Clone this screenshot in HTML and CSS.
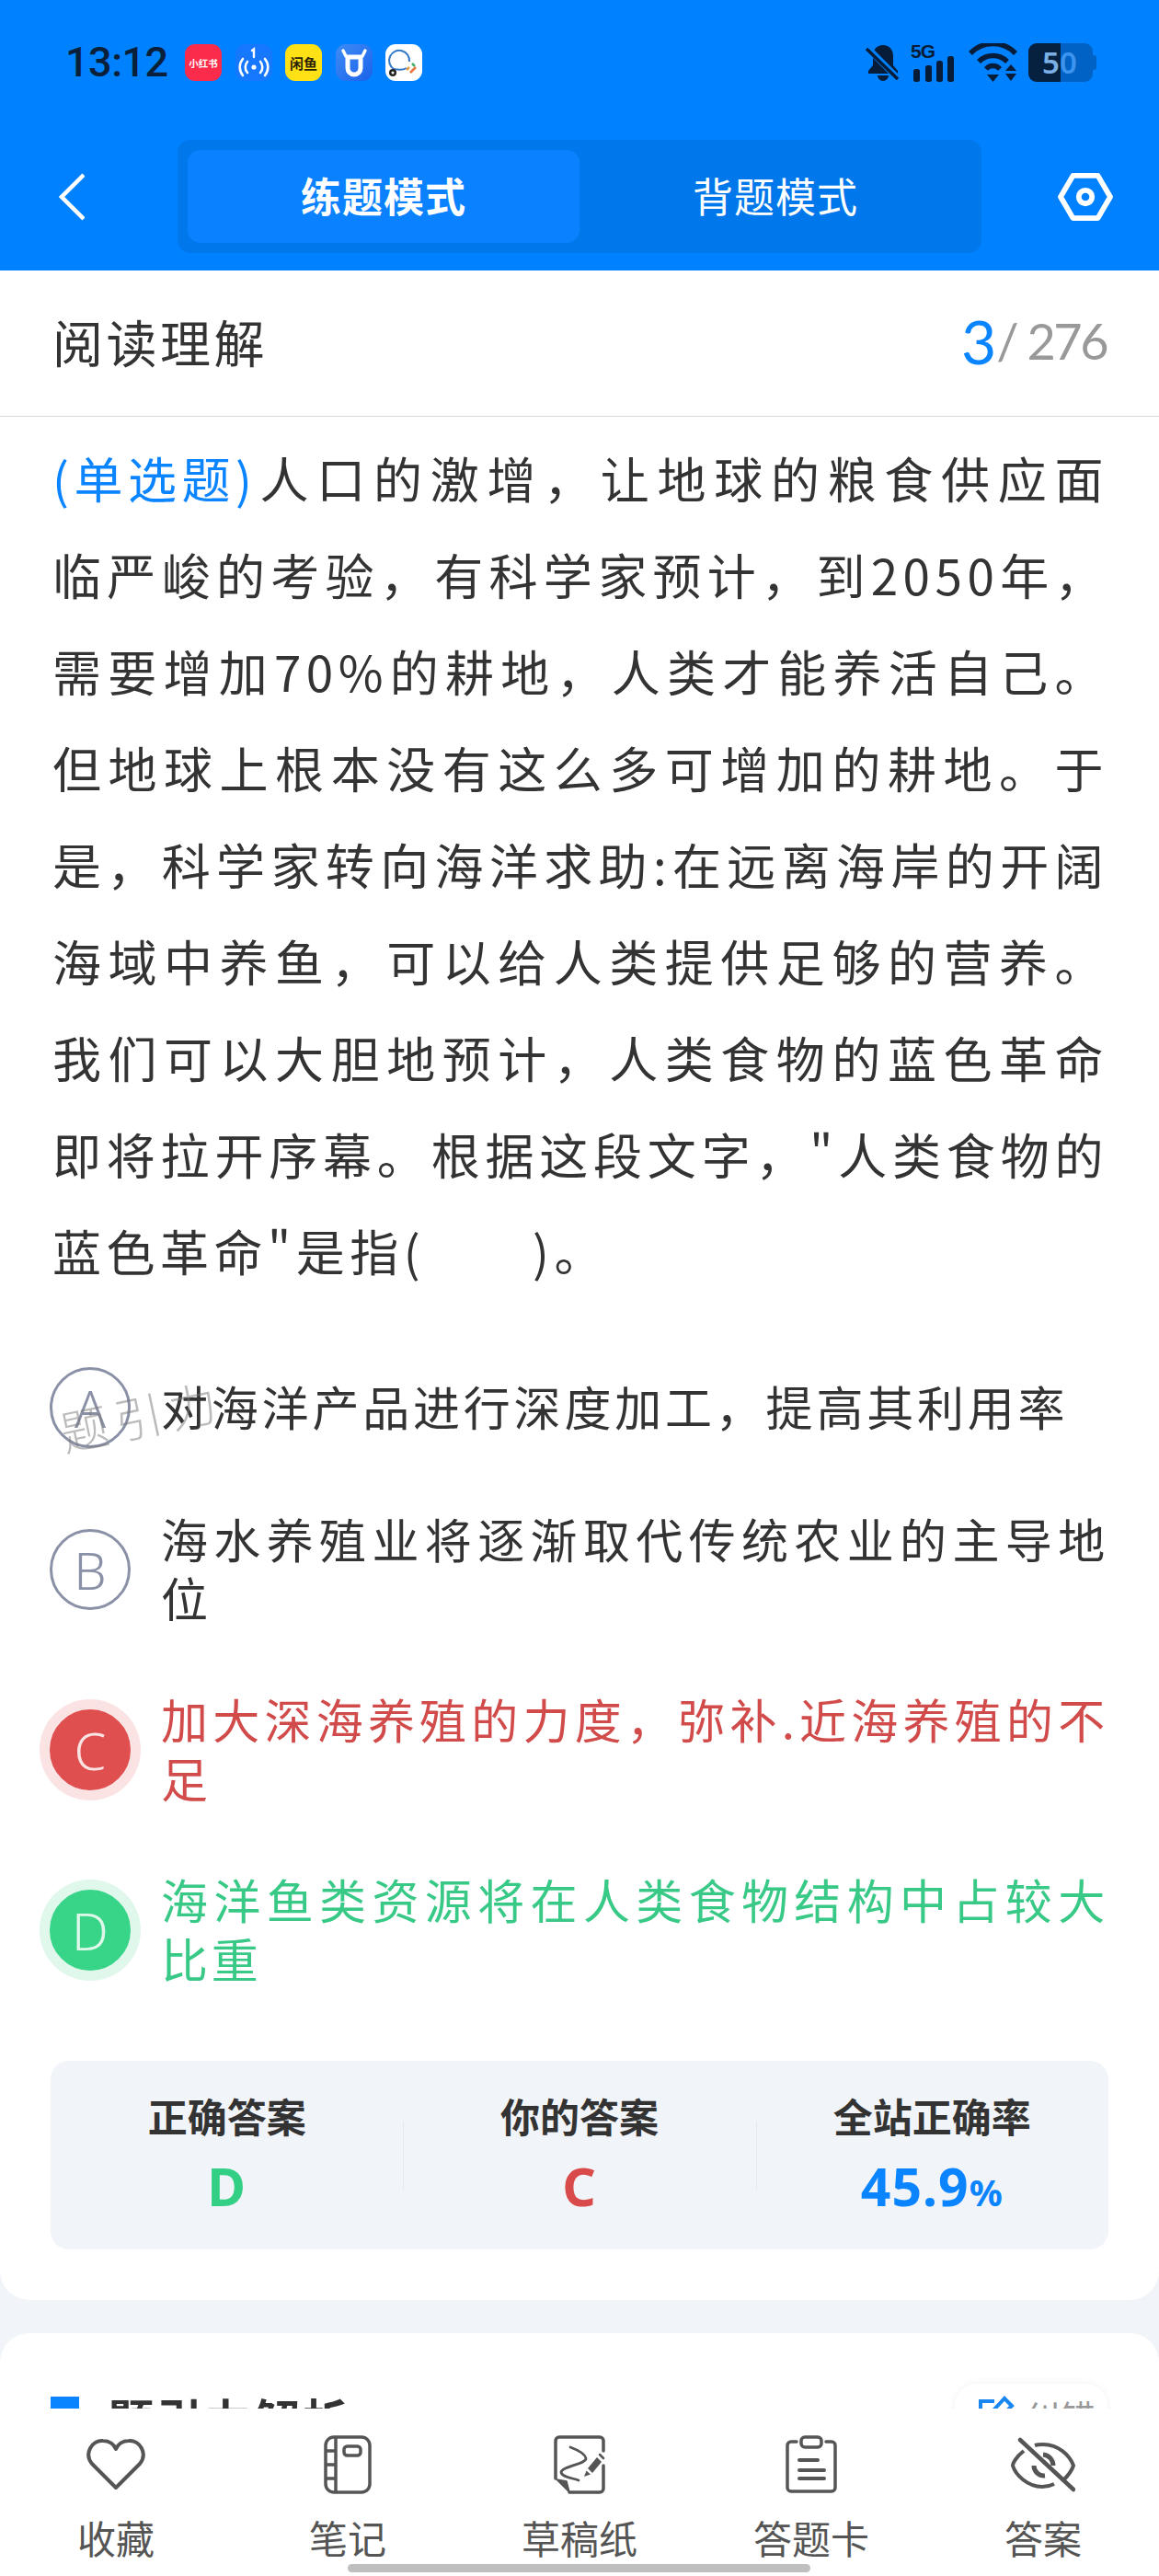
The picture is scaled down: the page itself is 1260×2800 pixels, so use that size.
FILE: index.html
```html
<!DOCTYPE html>
<html lang="zh-CN">
<head>
<meta charset="utf-8">
<title>练题模式</title>
<link rel="stylesheet" href="styles.css">
</head>
<body>
<div class="page">
  <header class="header">
    <div class="status">
      <div class="status-left">
        <span class="time">13:12</span>
        <div class="apps">
          <span class="app app-red">小红书</span>
          <span class="app app-blue">
            <svg viewBox="0 0 40 40" width="40" height="40" fill="none" stroke="#fff" stroke-width="2.6" stroke-linecap="round">
              <circle cx="20" cy="25" r="2.6" fill="#fff" stroke="none"/>
              <path d="M13 19a9 9 0 0 0 0 12M27 19a9 9 0 0 1 0 12M8 16a14 14 0 0 0 0 18M32 16a14 14 0 0 1 0 18"/>
              <path d="M18 7l2-1.500V14" stroke-width="2.4"/>
            </svg>
          </span>
          <span class="app app-yellow">闲鱼</span>
          <span class="app app-cow">
            <svg viewBox="0 0 40 40" width="40" height="40" fill="none" stroke="#fff" stroke-width="5" stroke-linejoin="round">
              <path d="M13 14h14v12a7 7 0 0 1-14 0z"/>
              <path d="M11 13L8 7M29 13l3-6" stroke-width="3.500" stroke-linecap="round"/>
            </svg>
          </span>
          <span class="app app-white">
            <svg viewBox="0 0 40 40" width="40" height="40" fill="none" stroke-width="2">
              <path d="M9 27a11 11 0 1 1 17-8" stroke="#3478c8"/>
              <path d="M9 27q9 2 14-1" stroke="#3478c8"/>
              <path d="M29 21l3 3" stroke="#3fb26a" stroke-width="2.500"/>
              <path d="M26 25l-3 3" stroke="#e89a3c" stroke-width="2.500"/>
              <path d="M27 31l2-2 4-4" stroke="#e8743c" stroke-width="2.500"/>
              <circle cx="8" cy="31" r="4" fill="#222" stroke="none"/>
              <circle cx="8" cy="31" r="1.500" fill="#fff" stroke="none"/>
            </svg>
          </span>
        </div>
      </div>
      <div class="status-right">
        <svg class="st-bell" viewBox="0 0 40 42" width="40" height="42">
          <path d="M20 2c-7 0-11 5-11 12v10l-5 6v3h32v-3l-5-6V14C31 7 27 2 20 2zM14 35a6 6 0 0 0 12 0z" fill="#071c38"/>
          <path d="M3 5l33 33" stroke="#0081ff" stroke-width="7"/>
          <path d="M2 6l34 33" stroke="#071c38" stroke-width="3.500"/>
        </svg>
        <div class="st-signal">
          <span class="st-5g">5G</span>
          <svg viewBox="0 0 50 28" width="50" height="28" fill="#071c38">
            <rect x="3" y="14" width="7" height="14" rx="2.500"/>
            <rect x="16" y="10" width="7" height="18" rx="2.500"/>
            <rect x="28" y="5" width="7" height="23" rx="2.500"/>
            <rect x="40" y="0" width="7" height="28" rx="2.500"/>
          </svg>
        </div>
        <svg class="st-wifi" viewBox="0 0 54 42" width="54" height="42" fill="none" stroke="#071c38" stroke-width="5.500">
          <path d="M2 11a34 34 0 0 1 49 0M11 20a22 22 0 0 1 31 0M19 28a10 10 0 0 1 15 0"/>
          <path d="M20 34h13l-6.500 8z" fill="#071c38" stroke="none"/>
          <path d="M40 30l6-7 6 7zM40 33l6 8 6-8z" fill="#071c38" stroke="none"/>
        </svg>
        <div class="battery">
          <div class="batt-body">
            <span class="batt-fill"></span>
            <span class="batt-num">5<i class="batt-num-off">0</i></span>
          </div>
          <span class="batt-cap"></span>
        </div>
      </div>
    </div>
    <nav class="nav">
      <svg class="back" viewBox="0 0 28 52" width="28" height="52" fill="none" stroke="#fff" stroke-width="4.500">
        <path d="M27 2L3 26l24 24"/>
      </svg>
      <div class="seg">
        <span class="seg-item seg-on">练题模式</span>
        <span class="seg-item">背题模式</span>
      </div>
      <svg class="hex" viewBox="0 0 62 56" width="60" height="54" fill="none" stroke="#fff" stroke-width="6" stroke-linejoin="round">
        <path d="M17 4h28l14 24-14 24H17L3 28z"/>
        <circle cx="31" cy="28" r="7.500"/>
      </svg>
    </nav>
  </header>

  <main class="main">
    <section class="card">
      <div class="title-row">
        <h1 class="title">阅读理解</h1>
        <div class="count"><span class="count-now">3</span><span class="count-all">/ 276</span></div>
      </div>
      <div class="content">
        <p class="question"><span class="qtype">(单选题)</span>人口的激增，让地球的粮食供应面临严峻的考验，有科学家预计，到2050年，需要增加70%的耕地，人类才能养活自己。但地球上根本没有这么多可增加的耕地。于是，科学家转向海洋求助:在远离海岸的开阔海域中养鱼，可以给人类提供足够的营养。我们可以大胆地预计，人类食物的蓝色革命即将拉开序幕。根据这段文字，"人类食物的蓝色革命"是指(　　)。</p>
        <div class="options">
          <div class="option">
            <span class="mark">A</span>
            <span class="otext">对海洋产品进行深度加工，提高其利用率</span>
            <span class="watermark">题引力</span>
          </div>
          <div class="option">
            <span class="mark">B</span>
            <span class="otext">海水养殖业将逐渐取代传统农业的主导地位</span>
          </div>
          <div class="option option-wrong">
            <span class="mark">C</span>
            <span class="otext">加大深海养殖的力度，弥补.近海养殖的不足</span>
          </div>
          <div class="option option-right">
            <span class="mark">D</span>
            <span class="otext">海洋鱼类资源将在人类食物结构中占较大比重</span>
          </div>
        </div>
        <div class="stats">
          <div class="stat"><span class="stat-label">正确答案</span><span class="stat-val val-green">D</span></div>
          <div class="stat"><span class="stat-label">你的答案</span><span class="stat-val val-red">C</span></div>
          <div class="stat"><span class="stat-label">全站正确率</span><span class="stat-val val-blue">45.9<small class="pct">%</small></span></div>
        </div>
      </div>
    </section>
    <section class="card card-next">
      <div class="next-head">
        <div class="next-title"><span class="next-mark"></span><span class="next-text">题引力解析</span></div>
        <div class="report">
          <svg viewBox="0 0 40 40" width="40" height="40" fill="none" stroke="#1a86f0" stroke-width="4">
            <path d="M18 6H3v32h32V22"/>
            <path d="M14 26l1-8L29 3l8 8-14 14z"/>
          </svg>
          <span>纠错</span>
        </div>
      </div>
    </section>
  </main>

  <footer class="tabbar">
    <div class="tab">
      <svg viewBox="0 0 64 58" width="64" height="58" fill="none" stroke="#555" stroke-width="4" stroke-linejoin="round">
        <path d="M32 54L6 28C-3 17 6 2 18 3c7 0 12 4 14 9 2-5 7-9 14-9 12-1 21 14 12 25z"/>
      </svg>
      <span class="tab-label">收藏</span>
    </div>
    <div class="tab">
      <svg viewBox="0 0 52 64" width="52" height="64" fill="none" stroke="#555" stroke-width="3.500">
        <rect x="2" y="2" width="48" height="60" rx="9"/>
        <path d="M13 2v60M2 17h11M2 32h11M2 47h11"/>
        <rect x="22" y="12" width="18" height="10" rx="3.500"/>
      </svg>
      <span class="tab-label">笔记</span>
    </div>
    <div class="tab">
      <svg viewBox="0 0 56 64" width="56" height="64" fill="none" stroke="#555" stroke-width="3.500" stroke-linecap="round">
        <path d="M17 62H50a4 4 0 0 0 4-4V33M54 17V6a4 4 0 0 0-4-4H6a4 4 0 0 0-4 4V47"/>
        <path d="M3 48L14 50L17 62z" fill="#555" stroke-width="1.500" stroke-linejoin="round"/>
        <path d="M18 13c8 3 16 7 17 12c1 6-26 9-27 15c0 5 10 6 19 9" stroke-width="2.800"/>
        <path d="M37 36L47 24L52 29L42 41z" fill="#555" stroke="none"/>
        <path d="M33 45l2.500-6.500 4.500 4z" fill="#555" stroke="none"/>
        <path d="M50 21l4 4" stroke-width="2.500"/>
      </svg>
      <span class="tab-label">草稿纸</span>
    </div>
    <div class="tab">
      <svg viewBox="0 0 56 64" width="56" height="64" fill="none" stroke="#555" stroke-width="3.500" stroke-linecap="round">
        <path d="M12 7H6a4 4 0 0 0-4 4v46a4 4 0 0 0 4 4h44a4 4 0 0 0 4-4V11a4 4 0 0 0-4-4h-6"/>
        <rect x="17" y="2" width="22" height="11" rx="4"/>
        <path d="M15 27h20M15 38h27M15 47h27" stroke-width="4"/>
      </svg>
      <span class="tab-label">答题卡</span>
    </div>
    <div class="tab">
      <svg viewBox="0 0 70 58" width="70" height="58" fill="none" stroke="#555" stroke-width="4">
        <path d="M14 14C5 21 2 28 2 30c3 10 16 23 32 23 5 0 9-1 13-3M26 8c3-1 6-1 9-1 17 0 29 12 33 23-2 6-6 11-11 16"/>
        <path d="M25 30a11 11 0 0 0 12 11M35 18a12 12 0 0 1 11 12" stroke-width="5"/>
        <path d="M10 2l58 54" stroke-width="4.500" stroke-linecap="round"/>
      </svg>
      <span class="tab-label">答案</span>
    </div>
    <span class="home-bar"></span>
  </footer>
</div>
</body>
</html>
```

FILE: styles.css
```css
* { box-sizing: border-box; }
html, body { margin: 0; padding: 0; }
body {
  font-family: "Noto Sans CJK SC", "Noto Sans", sans-serif;
  color: #333;
  background: #f1f4f8;
}
.page {
  width: 1260px;
  height: 2800px;
  display: flex;
  flex-direction: column;
  overflow: hidden;
}

/* header */
.header { height: 294px; flex: none; background: #0081ff; padding-top: 47px; }
.status {
  height: 42px;
  padding: 0 68px 0 71px;
  display: flex;
  justify-content: space-between;
  align-items: center;
}
.status-left { display: flex; align-items: center; gap: 21px; }
.time {
  font-family: Roboto, sans-serif;
  font-weight: 500;
  font-size: 45px;
  letter-spacing: -0.5px;
  line-height: 42px;
  color: #0a1f3a;
  width: 109px;
}
.apps { display: flex; gap: 14.500px; }
.app {
  width: 40px;
  height: 40px;
  border-radius: 11px;
  display: flex;
  align-items: center;
  justify-content: center;
  overflow: hidden;
  font-weight: 700;
  white-space: nowrap;
}
.app-red { background: #fb2c4b; color: #fff; font-size: 10.500px; }
.app-blue { background: #1677ff; }
.app-yellow { background: #ffe115; color: #2a2206; font-size: 15px; }
.app-cow { background: linear-gradient(135deg, #3f8cf5, #1a62ea); }
.app-white { background: #fff; }
.status-right { display: flex; align-items: center; }
.st-bell { margin-right: 10px; }
.st-signal { position: relative; width: 50px; height: 42px; margin-right: 13px; display: flex; align-items: flex-end; }
.st-5g {
  position: absolute;
  left: 0;
  top: -2px;
  font-family: "Liberation Sans", sans-serif;
  font-weight: 700;
  font-size: 21px;
  letter-spacing: -1px;
  line-height: 22px;
  color: #071c38;
}
.st-wifi { margin-right: 11px; }
.battery { display: flex; align-items: center; }
.batt-body {
  width: 70px;
  height: 42px;
  border-radius: 9px;
  background: #0062c4;
  display: flex;
  align-items: center;
  position: relative;
}
.batt-fill {
  position: absolute;
  left: 0;
  top: 0;
  bottom: 0;
  width: 35px;
  background: #06203f;
  border-radius: 9px 0 0 9px;
}
.batt-num {
  position: relative;
  padding-left: 15px;
  font-family: "Noto Sans", sans-serif;
  font-weight: 600;
  font-size: 33px;
  line-height: 42px;
  color: #7ab0e6;
}
.batt-num-off { font-style: normal; color: #3d94ee; }
.batt-cap { width: 4px; height: 16px; background: #0062c4; border-radius: 0 3px 3px 0; }

.nav {
  height: 123px;
  margin-top: 63px;
  padding: 0 50px 0 64px;
  display: flex;
  align-items: center;
}
.seg {
  width: 874px;
  height: 123px;
  margin-left: 101px;
  padding: 11px;
  background: #0077ea;
  border-radius: 14px;
  display: grid;
  grid-template-columns: 426px 426px;
}
.seg-item {
  display: flex;
  align-items: center;
  justify-content: center;
  padding-bottom: 4px;
  font-size: 44px;
  letter-spacing: 1px;
  color: #fff;
  border-radius: 14px;
}
.seg-on { background: #0a81ff; font-weight: 700; }
.back { flex: none; }
.hex { flex: none; margin-left: auto; }

/* main */
.main { flex: 1; min-height: 0; overflow: hidden; }
.card { background: #fff; border-radius: 0 0 32px 32px; }
.title-row {
  height: 159px;
  padding: 0 55px 6px 57px;
  border-bottom: 1px solid #d9d9d9;
  display: flex;
  align-items: center;
  justify-content: space-between;
}
.title { margin: 0; font-size: 55px; font-weight: 400; letter-spacing: 3.500px; color: #333; }
.count { font-family: Lato, sans-serif; display: flex; align-items: center; white-space: pre; }
.count-now { font-size: 66px; color: #0a84ff; }
.count-all { font-size: 54px; letter-spacing: -2.500px; color: #999; margin-right: 2px; }
.content { padding: 14px 55px 55px 57px; }
.question {
  margin: 0;
  font-size: 53px;
  line-height: 105px;
  letter-spacing: 5.500px;
  text-align: justify;
  color: #333;
}
.qtype { display: inline-block; color: #0a84ff; }
.options { margin-top: 74px; display: flex; flex-direction: column; gap: 68px; }
.option { position: relative; display: flex; align-items: center; gap: 33px; margin-left: -3px; }
.mark {
  flex: none;
  width: 88px;
  height: 88px;
  border-radius: 50%;
  border: 3px solid #8a90a6;
  color: #8a90a6;
  display: flex;
  align-items: center;
  justify-content: center;
  font-family: "Noto Sans", sans-serif;
  font-weight: 300;
  font-size: 56px;
}
.otext {
  flex: 1;
  font-size: 51px;
  line-height: 64px;
  letter-spacing: 3.800px;
  text-align: justify;
  color: #333;
  transform: translateY(-2px);
}
.watermark {
  position: absolute;
  left: 10px;
  top: 22px;
  font-size: 52px;
  line-height: 60px;
  letter-spacing: 8px;
  font-weight: 300;
  color: rgba(120, 120, 120, 0.5);
  transform: rotate(-12deg);
  pointer-events: none;
}
.option-wrong .mark { background: #e04f4f; border-color: #e04f4f; color: #fbe3e3; box-shadow: 0 0 0 11px #fbe3e3; }
.option-wrong .otext { color: #d24b4b; }
.option-right .mark { background: #38d488; border-color: #38d488; color: #def8ea; box-shadow: 0 0 0 11px #e0f7ec; }
.option-right .otext { color: #38c987; }

.stats {
  margin: 78px 0 0 -2px;
  height: 205px;
  background: #f1f4f8;
  border-radius: 20px;
  display: grid;
  grid-template-columns: repeat(3, 1fr);
  align-items: center;
}
.stat {
  display: flex;
  flex-direction: column;
  align-items: center;
  height: 100%;
  padding-top: 33px;
  position: relative;
}
.stat + .stat::before {
  content: "";
  position: absolute;
  left: 0;
  top: 66px;
  height: 75px;
  width: 1px;
  background: #e6e9ed;
}
.stat-label { font-size: 43px; line-height: 52px; font-weight: 700; color: #333; }
.stat-val {
  margin-top: 17px;
  font-family: "Noto Sans", sans-serif;
  font-size: 57px;
  line-height: 68px;
  font-weight: 700;
  letter-spacing: 1px;
}
.val-green { color: #33cf85; }
.val-red { color: #d94a4a; }
.val-blue { color: #0a84ff; }
.pct { font-size: 40px; }

.card-next { margin-top: 36px; border-radius: 32px 32px 0 0; height: 400px; padding: 55px 56px 0 55px; }
.next-head { display: flex; align-items: flex-start; justify-content: space-between; }
.next-title { display: flex; align-items: flex-start; gap: 31px; font-size: 50px; line-height: 60px; font-weight: 700; letter-spacing: 3px; }
.next-mark { width: 31px; height: 31px; margin-top: 14px; background: #0a84ff; }
.next-text { margin-top: 7px; }
.report {
  width: 166px;
  height: 70px;
  border-radius: 24px;
  box-shadow: 0 0 8px rgba(0, 0, 0, 0.06);
  display: flex;
  align-items: flex-start;
  gap: 12px;
  padding: 13px 0 0 25px;
  font-size: 38px;
  line-height: 44px;
  color: #999;
}

/* tab bar */
.tabbar {
  flex: none;
  height: 182px;
  background: #fff;
  display: grid;
  grid-template-columns: repeat(5, 1fr);
  position: relative;
  padding-top: 29px;
}
.tab { display: flex; flex-direction: column; align-items: center; height: 137px; justify-content: space-between; }
.tab svg { flex: none; height: 64px; }
.tab-label { font-size: 42px; line-height: 52px; color: #555; }
.home-bar {
  position: absolute;
  left: 378px;
  top: 169px;
  width: 503px;
  height: 9px;
  border-radius: 5px;
  background: #bfbfbf;
}
```
